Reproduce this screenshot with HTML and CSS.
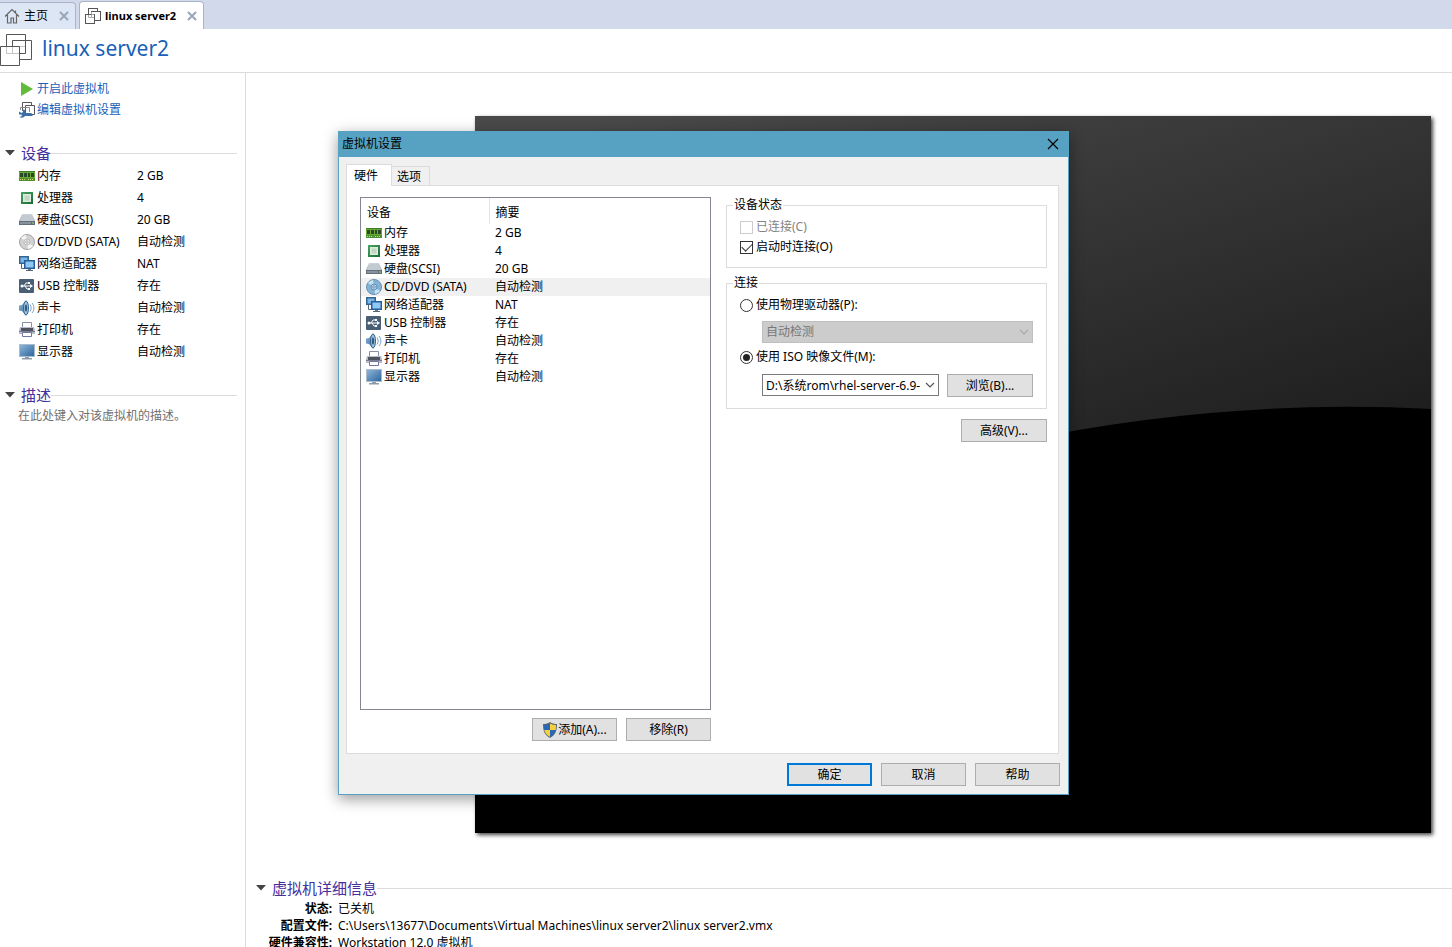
FILE: index.html
```html
<!DOCTYPE html>
<html lang="zh-CN">
<head>
<meta charset="utf-8">
<title>linux server2</title>
<link rel="stylesheet" href="styles.css">
</head>
<body>
<svg class="sprite" aria-hidden="true">
  <defs>
    <linearGradient id="g-blue" x1="0" y1="0" x2="1" y2="1"><stop offset="0" stop-color="#8db4d8"/><stop offset="1" stop-color="#2f679f"/></linearGradient>
    <linearGradient id="g-grey" x1="0" y1="0" x2="0" y2="1"><stop offset="0" stop-color="#d5dbe1"/><stop offset="1" stop-color="#7e8790"/></linearGradient>
    <linearGradient id="g-cpu" x1="0" y1="0" x2="1" y2="1"><stop offset="0" stop-color="#4aa564"/><stop offset="1" stop-color="#176b36"/></linearGradient>
    <symbol id="i-vm" viewBox="0 0 32 32">
      <path d="M12.500 12v7.500H20M12.500 6.500v6M6.500 12.500v7h6M12.500 19.500h7v-7M19.500 12.500h6" fill="none" stroke="#c4c4c4"/>
      <path d="M6.500 12.500V.5h19v6M12.500 12.500v-6h19v19h-12M.5 12.500h19v19H.5zM25.500 6.500v13h-6" fill="none" stroke="#555"/>
    </symbol>
    <symbol id="i-vm-small" viewBox="0 0 16 16">
      <g fill="#fff" stroke="#555"><rect x="3.500" y="0.500" width="9" height="9"/><rect x="6.500" y="3.500" width="9" height="9"/><rect x="0.500" y="6.500" width="9" height="9"/></g>
      <path d="M3.500 7v2.500H6M6.500 7v2.500H9M6.500 4v2.500H9" fill="none" stroke="#aaa"/>
    </symbol>
    <symbol id="i-home" viewBox="0 0 16 16">
      <path d="M1 8.500 8 1.500l7 7M3.500 7v8h3.500v-5h2.500v5h3V7M11.500 2.500v2" fill="none" stroke="#666" stroke-width="1.200"/>
    </symbol>
    <symbol id="i-play" viewBox="0 0 16 16"><path d="M2 1v14L14 8z" fill="#62bb3c"/></symbol>
    <symbol id="i-edit" viewBox="0 0 16 16">
      <g fill="#fff" stroke="#555"><path d="M3.500.5h9v8h-9z"/><path d="M6.500 3.500h9v9h-9z"/></g>
      <path d="M1.500 8V5.500h9V10" fill="none" stroke="#888"/>
      <path d="M0 9.500 2.500 11 4 10 3.500 7.500C6 7.500 7 9 6.500 11H11c2 0 3 1 2.500 3H6c-1.500 2-4 2-5.500 1L3 14l-.5-1.500L0 12.500z" fill="#3a6ea5"/>
    </symbol>
    <symbol id="i-memory" viewBox="0 0 16 16">
      <path d="M0 3h16v10H0z" fill="#6ba832"/><path d="M0 3h16v1H0z" fill="#3c7d2c"/><path d="M1 5h3v4H1zM5 5h3v4H5zM9 5h2v4H9zM12 5h3v4h-3z" fill="#274a27"/>
      <path d="M0 10h16v3H0z" fill="#4c9232"/><path d="M1 11.500h6M9 11.500h6" stroke="#d9d46c" stroke-dasharray="1 1"/>
    </symbol>
    <symbol id="i-cpu" viewBox="0 0 16 16">
      <path d="M2 2h12v12H2z" fill="url(#g-cpu)"/><path d="M4 4h8v8H4z" fill="#dcebdc"/><path d="M5.500 5.500h5v5h-5z" fill="#c3d6c4"/>
    </symbol>
    <symbol id="i-disk" viewBox="0 0 16 16">
      <path d="M3 2h10l3 7v4H0V9z" fill="url(#g-grey)"/><path d="M3.500 2.500h9L15 9H1z" fill="#c3cad1"/><path d="M0 9h16v4H0z" fill="#626e79"/><path d="M1 10h11v2H1z" fill="#87929c"/><path d="M13 10.500h2v1h-2z" fill="#9ce27d"/>
    </symbol>
    <symbol id="i-cd" viewBox="0 0 16 16">
      <circle cx="8" cy="8" r="7.500" fill="#d2d2d2" stroke="#a3a3a3"/><path d="M8 8 2 4a7 7 0 0 1 5-3zM8 8l6 4a7 7 0 0 1-5 3z" fill="#f4f4f4"/><circle cx="8" cy="8" r="3" fill="#eee" stroke="#bbb"/><circle cx="8" cy="8" r="1.200" fill="#fff" stroke="#aaa"/>
    </symbol>
    <symbol id="i-cd-blue" viewBox="0 0 16 16">
      <circle cx="8" cy="8" r="7.500" fill="#85b3d6" stroke="#6690b2"/><path d="M8 8 2 4a7 7 0 0 1 5-3zM8 8l6 4a7 7 0 0 1-5 3z" fill="#c9e2f2"/><circle cx="8" cy="8" r="3" fill="#b7d7ec" stroke="#5e91b9"/><circle cx="8" cy="8" r="1.200" fill="#fff" stroke="#5d8aac"/>
    </symbol>
    <symbol id="i-net" viewBox="0 0 16 16">
      <path d="M0 0h10v8H0z" fill="#35658f"/><path d="M1.500 1.500h7v5h-7z" fill="#79b5e6"/><path d="M5 4h11v9H5z" fill="#245f9c"/><path d="M6.500 5.500h8v6h-8z" fill="#8fc8f5"/><path d="M9 13h3v1H9z" fill="#777"/><path d="M7 14.500h7M2.500 8v4.500H5" stroke="#567" fill="none"/>
    </symbol>
    <symbol id="i-usb" viewBox="0 0 16 16">
      <rect x="0" y="1" width="15" height="14" rx="1" fill="#4a5f76"/><path d="M2 8h10M5 8l2-3h2M6 8l2 3h2" stroke="#fff" fill="none"/><circle cx="3" cy="8" r="1.500" fill="#fff"/><path d="M11 6l3 2-3 2zM9 4h2v2H9zM9 10h2v2H9z" fill="#fff"/>
    </symbol>
    <symbol id="i-sound" viewBox="0 0 16 16">
      <path d="M0 5.500 3 5l4-4.500c2 3 2 12 0 15L3 11l-3-.5z" fill="url(#g-blue)"/><ellipse cx="7" cy="8" rx="2.500" ry="7" fill="#9fc0dc" stroke="#35658f"/><ellipse cx="7" cy="8" rx="1.200" ry="3.500" fill="#315b82"/>
      <path d="M11 4.500c1.500 2 1.500 5 0 7M13 3c2.500 3 2.500 7 0 10" fill="none" stroke="#73a2cb"/>
    </symbol>
    <symbol id="i-printer" viewBox="0 0 16 16">
      <path d="M3.500.5h9V6h-9z" fill="#fff" stroke="#8890a5"/><path d="M1 5h14l1 3v4H0V8z" fill="#b7bbc7"/><path d="M2 6h12v3H2z" fill="#4f535f"/><path d="M0 9.500h16" stroke="#7b8090"/><path d="M3.500 10.500h9v4h-9z" fill="#fff" stroke="#7077a0"/>
    </symbol>
    <symbol id="i-display" viewBox="0 0 16 16">
      <path d="M0 0h16v13H0z" fill="#a9bccd"/><path d="M1 1h14v11H1z" fill="url(#g-blue)"/><path d="M6 13h4v1H6z" fill="#8f9aa5"/><path d="M3 14h10v1.500H3z" fill="#8d9cab"/>
    </symbol>
    <symbol id="i-shield" viewBox="0 0 16 16">
      <path d="M8 0c2 1.500 4.500 2 7 2 0 7-1.500 11-7 14C2.500 13 1 9 1 2c2.500 0 5-.5 7-2z" fill="#5b6770"/>
      <path d="M8 1.500V8H2.300C2 6.500 2 5 2 3c2 0 4-.5 6-1.500z" fill="#2869b5"/><path d="M8 1.500V8h5.700c.3-1.500.3-3 .3-5-2 0-4-.5-6-1.500z" fill="#f5cf3c"/><path d="M8 8v6.800C4.500 13 3 11 2.300 8z" fill="#f5cf3c"/><path d="M8 8v6.800C11.500 13 13 11 13.700 8z" fill="#2869b5"/>
    </symbol>
    <symbol id="i-close" viewBox="0 0 10 10"><path d="M1 1l8 8M9 1 1 9" fill="none" stroke="currentColor" stroke-width="2"/></symbol>
    <symbol id="i-close-thin" viewBox="0 0 12 12"><path d="M1 1l10 10M11 1 1 11" fill="none" stroke="currentColor" stroke-width="1.200"/></symbol>
    <symbol id="i-chevron" viewBox="0 0 10 10"><path d="M1 3l4 4 4-4" fill="none" stroke="currentColor" stroke-width="1.200"/></symbol>
    <symbol id="i-arrow" viewBox="0 0 10 6"><path d="M0 0h10L5 5.500z" fill="#444"/></symbol>
  </defs>
</svg>

<nav class="tabs">
  <div class="tab">
    <svg class="icon"><use href="#i-home"/></svg><a href="#">主页</a>
    <button class="tab-close" aria-label="关闭"><svg><use href="#i-close"/></svg></button>
  </div>
  <div class="tab tab-active">
    <svg class="icon"><use href="#i-vm-small"/></svg><a href="#">linux server2</a>
    <button class="tab-close" aria-label="关闭"><svg><use href="#i-close"/></svg></button>
  </div>
</nav>

<header class="header">
  <svg class="header-icon"><use href="#i-vm"/></svg>
  <h1>linux server2</h1>
</header>

<div class="workspace">
  <aside class="sidebar">
    <div class="actions">
      <a href="#"><svg class="icon"><use href="#i-play"/></svg>开启此虚拟机</a>
      <a href="#"><svg class="icon"><use href="#i-edit"/></svg>编辑虚拟机设置</a>
    </div>
    <section class="section">
      <h2 class="section-title"><svg class="arrow"><use href="#i-arrow"/></svg>设备</h2>
      <table class="device-table">
        <tr><th><span><svg class="icon"><use href="#i-memory"/></svg>内存</span></th><td>2 GB</td></tr>
        <tr><th><span><svg class="icon"><use href="#i-cpu"/></svg>处理器</span></th><td>4</td></tr>
        <tr><th><span><svg class="icon"><use href="#i-disk"/></svg>硬盘(SCSI)</span></th><td>20 GB</td></tr>
        <tr><th><span><svg class="icon"><use href="#i-cd"/></svg>CD/DVD (SATA)</span></th><td>自动检测</td></tr>
        <tr><th><span><svg class="icon"><use href="#i-net"/></svg>网络适配器</span></th><td>NAT</td></tr>
        <tr><th><span><svg class="icon"><use href="#i-usb"/></svg>USB 控制器</span></th><td>存在</td></tr>
        <tr><th><span><svg class="icon"><use href="#i-sound"/></svg>声卡</span></th><td>自动检测</td></tr>
        <tr><th><span><svg class="icon"><use href="#i-printer"/></svg>打印机</span></th><td>存在</td></tr>
        <tr><th><span><svg class="icon"><use href="#i-display"/></svg>显示器</span></th><td>自动检测</td></tr>
      </table>
    </section>
    <section class="section">
      <h2 class="section-title"><svg class="arrow"><use href="#i-arrow"/></svg>描述</h2>
      <p class="hint">在此处键入对该虚拟机的描述。</p>
    </section>
  </aside>

  <main class="main">
    <svg class="screen" viewBox="0 0 956 717" preserveAspectRatio="none">
      <defs><linearGradient id="g-screen" gradientUnits="userSpaceOnUse" x1="300" y1="-60" x2="480" y2="480"><stop offset="0" stop-color="#4a4a4a"/><stop offset="1" stop-color="#1c1c1c"/></linearGradient></defs>
      <rect width="956" height="717" fill="url(#g-screen)"/>
      <path d="M0 533Q478 268 956 293V717H0z" fill="#000"/>
    </svg>
    <section class="details">
      <h2 class="section-title"><svg class="arrow"><use href="#i-arrow"/></svg>虚拟机详细信息</h2>
      <dl>
        <dt>状态:</dt><dd>已关机</dd>
        <dt>配置文件:</dt><dd>C:\Users\13677\Documents\Virtual Machines\linux server2\linux server2.vmx</dd>
        <dt>硬件兼容性:</dt><dd>Workstation 12.0 虚拟机</dd>
      </dl>
    </section>
  </main>
</div>

<div class="dialog" role="dialog" aria-labelledby="dialog-title">
  <div class="titlebar">
    <span id="dialog-title">虚拟机设置</span>
    <button class="dialog-close" aria-label="关闭"><svg><use href="#i-close-thin"/></svg></button>
  </div>
  <div class="dialog-body">
    <div class="dialog-tabs" role="tablist">
      <button class="dialog-tab dialog-tab-active" role="tab" aria-selected="true">硬件</button>
      <button class="dialog-tab" role="tab">选项</button>
    </div>
    <div class="panel">
      <div class="hardware">
        <div class="listbox">
          <table class="hardware-table">
            <thead><tr><th>设备</th><th>摘要</th></tr></thead>
            <tbody>
              <tr><td><span><svg class="icon"><use href="#i-memory"/></svg>内存</span></td><td>2 GB</td></tr>
              <tr><td><span><svg class="icon"><use href="#i-cpu"/></svg>处理器</span></td><td>4</td></tr>
              <tr><td><span><svg class="icon"><use href="#i-disk"/></svg>硬盘(SCSI)</span></td><td>20 GB</td></tr>
              <tr class="selected"><td><span><svg class="icon"><use href="#i-cd-blue"/></svg>CD/DVD (SATA)</span></td><td>自动检测</td></tr>
              <tr><td><span><svg class="icon"><use href="#i-net"/></svg>网络适配器</span></td><td>NAT</td></tr>
              <tr><td><span><svg class="icon"><use href="#i-usb"/></svg>USB 控制器</span></td><td>存在</td></tr>
              <tr><td><span><svg class="icon"><use href="#i-sound"/></svg>声卡</span></td><td>自动检测</td></tr>
              <tr><td><span><svg class="icon"><use href="#i-printer"/></svg>打印机</span></td><td>存在</td></tr>
              <tr><td><span><svg class="icon"><use href="#i-display"/></svg>显示器</span></td><td>自动检测</td></tr>
            </tbody>
          </table>
        </div>
        <div class="button-row">
          <button class="button"><svg class="icon"><use href="#i-shield"/></svg>添加(A)...</button>
          <button class="button">移除(R)</button>
        </div>
      </div>
      <div class="options">
        <fieldset class="group">
          <legend>设备状态</legend>
          <label class="choice choice-disabled"><input type="checkbox" disabled>已连接(C)</label>
          <label class="choice"><input type="checkbox" checked>启动时连接(O)</label>
        </fieldset>
        <fieldset class="group group-connection">
          <legend>连接</legend>
          <label class="choice"><input type="radio" name="source">使用物理驱动器(P):</label>
          <div class="combo combo-disabled">
            <select aria-label="物理驱动器" disabled><option>自动检测</option></select>
            <svg class="combo-arrow"><use href="#i-chevron"/></svg>
          </div>
          <label class="choice"><input type="radio" name="source" checked>使用 ISO 映像文件(M):</label>
          <div class="file-row">
            <div class="combo">
              <input type="text" aria-label="ISO 映像文件" value="D:\系统rom\rhel-server-6.9-x">
              <svg class="combo-arrow"><use href="#i-chevron"/></svg>
            </div>
            <button class="button">浏览(B)...</button>
          </div>
        </fieldset>
        <button class="button">高级(V)...</button>
      </div>
    </div>
    <div class="button-row">
      <button class="button button-default">确定</button>
      <button class="button">取消</button>
      <button class="button">帮助</button>
    </div>
  </div>
</div>
</body>
</html>
```
FILE: styles.css
```css
* { box-sizing: border-box; }

body {
  margin: 0;
  height: 100vh;
  overflow: hidden;
  position: relative;
  background: #fff;
  color: #000;
  font: 12px/16px "Noto Sans", "Noto Sans CJK SC", sans-serif;
}

button, input, select { font: inherit; color: inherit; margin: 0; }
a { color: inherit; text-decoration: none; }
svg { display: block; flex: none; }
table { border-collapse: collapse; }
th { font-weight: normal; text-align: left; }
th, td { padding: 0; white-space: nowrap; }

.sprite { position: absolute; width: 0; height: 0; }
.icon { width: 16px; height: 16px; }

/* Document tabs */
.tabs {
  display: flex;
  align-items: flex-end;
  gap: 3px;
  height: 29px;
  background: #d2d9eb;
}
.tab {
  display: flex;
  align-items: center;
  gap: 4px;
  height: 27px;
  padding: 0 6px 0 4px;
  background: #dce6f4;
  border: 1px solid #a9b4c8;
  border-width: 1px 1px 0 0;
  border-radius: 0 4px 0 0;
}
.tab-active {
  height: 28px;
  background: #fff;
  border-width: 1px 1px 0 1px;
  border-radius: 4px 4px 0 0;
  font-weight: bold;
  font-size: 11px;
  padding-left: 5px;
}
.tab-close {
  margin-left: 7px;
  padding: 0;
  border: 0;
  background: none;
  color: #98a6b8;
}
.tab-close svg { width: 10px; height: 10px; }

/* Title */
.header {
  display: flex;
  align-items: flex-start;
  gap: 10px;
  height: 44px;
  padding-top: 5px;
  border-bottom: 1px solid #dcdcdc;
}
.header-icon { width: 32px; height: 32px; }
h1 {
  margin: 0;
  font-size: 21px;
  line-height: 28px;
  font-weight: normal;
  color: #1a5fb9;
}

.workspace { display: flex; height: calc(100vh - 73px); }

/* Sidebar */
.sidebar {
  flex: none;
  width: 246px;
  padding: 5px 8px 0 5px;
  border-right: 1px solid #dcdcdc;
}
.actions { color: #1a5fb9; padding: 0 0 1px 14px; }
.actions a { display: flex; align-items: center; gap: 2px; height: 21px; }
.section { margin-top: 21px; }
.section-title {
  display: flex;
  align-items: center;
  height: 22px;
  margin: 0;
  font-size: 15px;
  font-weight: normal;
  color: #44309c;
}
.section-title::after { content: ""; flex: 1; height: 1px; background: #dcdcdc; }
.arrow { width: 10px; height: 6px; margin-right: 6px; }
.device-table { margin: 1px 0 0 14px; }
.device-table tr { height: 22px; }
.device-table th { width: 118px; }
.device-table span, .hardware-table span { display: flex; align-items: center; gap: 2px; }
.hint { margin: 0 0 0 13px; line-height: 20px; color: #707070; }

/* Console preview */
.main { flex: 1; min-width: 0; padding: 43px 0 0 10px; }
.screen {
  width: calc(100% - 240px);
  aspect-ratio: 4 / 3;
  margin-left: 219px;
  background: #000;
  box-shadow: 2px 2px 4px #444;
}
.details { margin-top: 44px; }
.details dl {
  display: grid;
  grid-template-columns: 76px 1fr;
  column-gap: 6px;
  margin: 1px 0 0;
  line-height: 17px;
}
.details dt { text-align: right; font-weight: bold; white-space: nowrap; }
.details dd { margin: 0; }

/* Settings window */
.dialog {
  position: absolute;
  left: 338px;
  top: 131px;
  width: 731px;
  background: #f0f0f0;
  border: 1px solid #57a2c2;
  border-top: 0;
  box-shadow: 0 4px 14px rgba(0, 0, 0, 0.4);
}
.titlebar {
  display: flex;
  align-items: center;
  justify-content: space-between;
  height: 26px;
  padding: 0 9px 0 3px;
  background: #57a2c2;
}
.dialog-close { padding: 0; border: 0; background: none; }
.dialog-close svg { width: 12px; height: 12px; }
.dialog-body { padding: 7px 8px 8px 7px; }
.dialog-tabs { display: flex; align-items: flex-end; height: 21px; }
.dialog-tab {
  height: 19px;
  padding: 1px 8px 0 5px;
  border: 1px solid #dcdcdc;
  border-width: 1px 1px 0 0;
  background: #f0f0f0;
}
.dialog-tab-active {
  height: 22px;
  padding: 0 13px 0 7px;
  border-left-width: 1px;
  background: #fff;
  position: relative;
  margin-bottom: -1px;
}
.panel {
  display: flex;
  justify-content: space-between;
  margin-right: 1px;
  padding: 11px 11px 12px 13px;
  background: #fff;
  border: 1px solid #dcdcdc;
}
.hardware { width: 351px; }
.listbox { height: 513px; border: 1px solid #828790; }
.hardware-table { width: 100%; }
.hardware-table th { height: 26px; padding: 3px 0 0 6px; }
.hardware-table th:first-child { width: 128px; border-right: 1px solid #e5e5e5; }
.hardware-table tbody tr { height: 18px; }
.hardware-table td:first-child { padding-left: 5px; }
.hardware-table td + td { padding-left: 6px; }
.selected { background: #f0f0f0; }

.button-row { display: flex; justify-content: flex-end; gap: 9px; margin-top: 8px; }
.dialog-body > .button-row { margin-top: 9px; }
.button {
  display: flex;
  align-items: center;
  justify-content: center;
  width: 86px;
  height: 23px;
  padding: 0;
  border: 1px solid #adadad;
  background: #e1e1e1;
  white-space: nowrap;
}
.button-row .button { width: 85px; }
.button-default { border: 2px solid #0078d7; }

.options {
  display: flex;
  flex-direction: column;
  align-items: flex-end;
  width: 321px;
}
.group {
  width: 100%;
  margin: 0;
  padding: 4px 13px 10px;
  border: 1px solid #dcdcdc;
}
.group legend { margin-left: -7px; padding: 0 1px; line-height: 16px; }
.group-connection { margin: 7px 0 10px; padding-bottom: 11px; }
.choice { display: flex; align-items: center; gap: 3px; height: 20px; }
.choice-disabled { color: #838383; }
.choice input {
  appearance: none;
  flex: none;
  display: grid;
  place-items: center;
  width: 13px;
  height: 13px;
  border: 1px solid #333;
  background: #fff;
}
.choice input:disabled { border-color: #ccc; }
.choice input[type="radio"] { border-radius: 50%; }
.choice input[type="radio"]:checked::before {
  content: "";
  width: 7px;
  height: 7px;
  border-radius: 50%;
  background: #222;
}
.choice input[type="checkbox"]:checked::before {
  content: "";
  width: 9px;
  height: 5px;
  margin-bottom: 3px;
  border: solid #333;
  border-width: 0 0 1px 1px;
  rotate: -45deg;
}
.combo { position: relative; flex: 1; height: 22px; }
.combo select, .combo input {
  appearance: none;
  display: block;
  width: 100%;
  height: 100%;
  padding: 0 18px 0 3px;
  border: 1px solid #7a7a7a;
  border-radius: 0;
  background: #fff;
}
.combo-disabled { margin: 6px 0 4px 22px; }
.combo-disabled select { color: #777; opacity: 1; background: #ccc; border-color: #bfbfbf; }
.combo-arrow { position: absolute; right: 4px; top: 6px; width: 10px; height: 10px; color: #555; pointer-events: none; }
.combo-disabled .combo-arrow { color: #aaa; }
.file-row { display: flex; gap: 8px; margin: 7px 0 0 22px; }
```
